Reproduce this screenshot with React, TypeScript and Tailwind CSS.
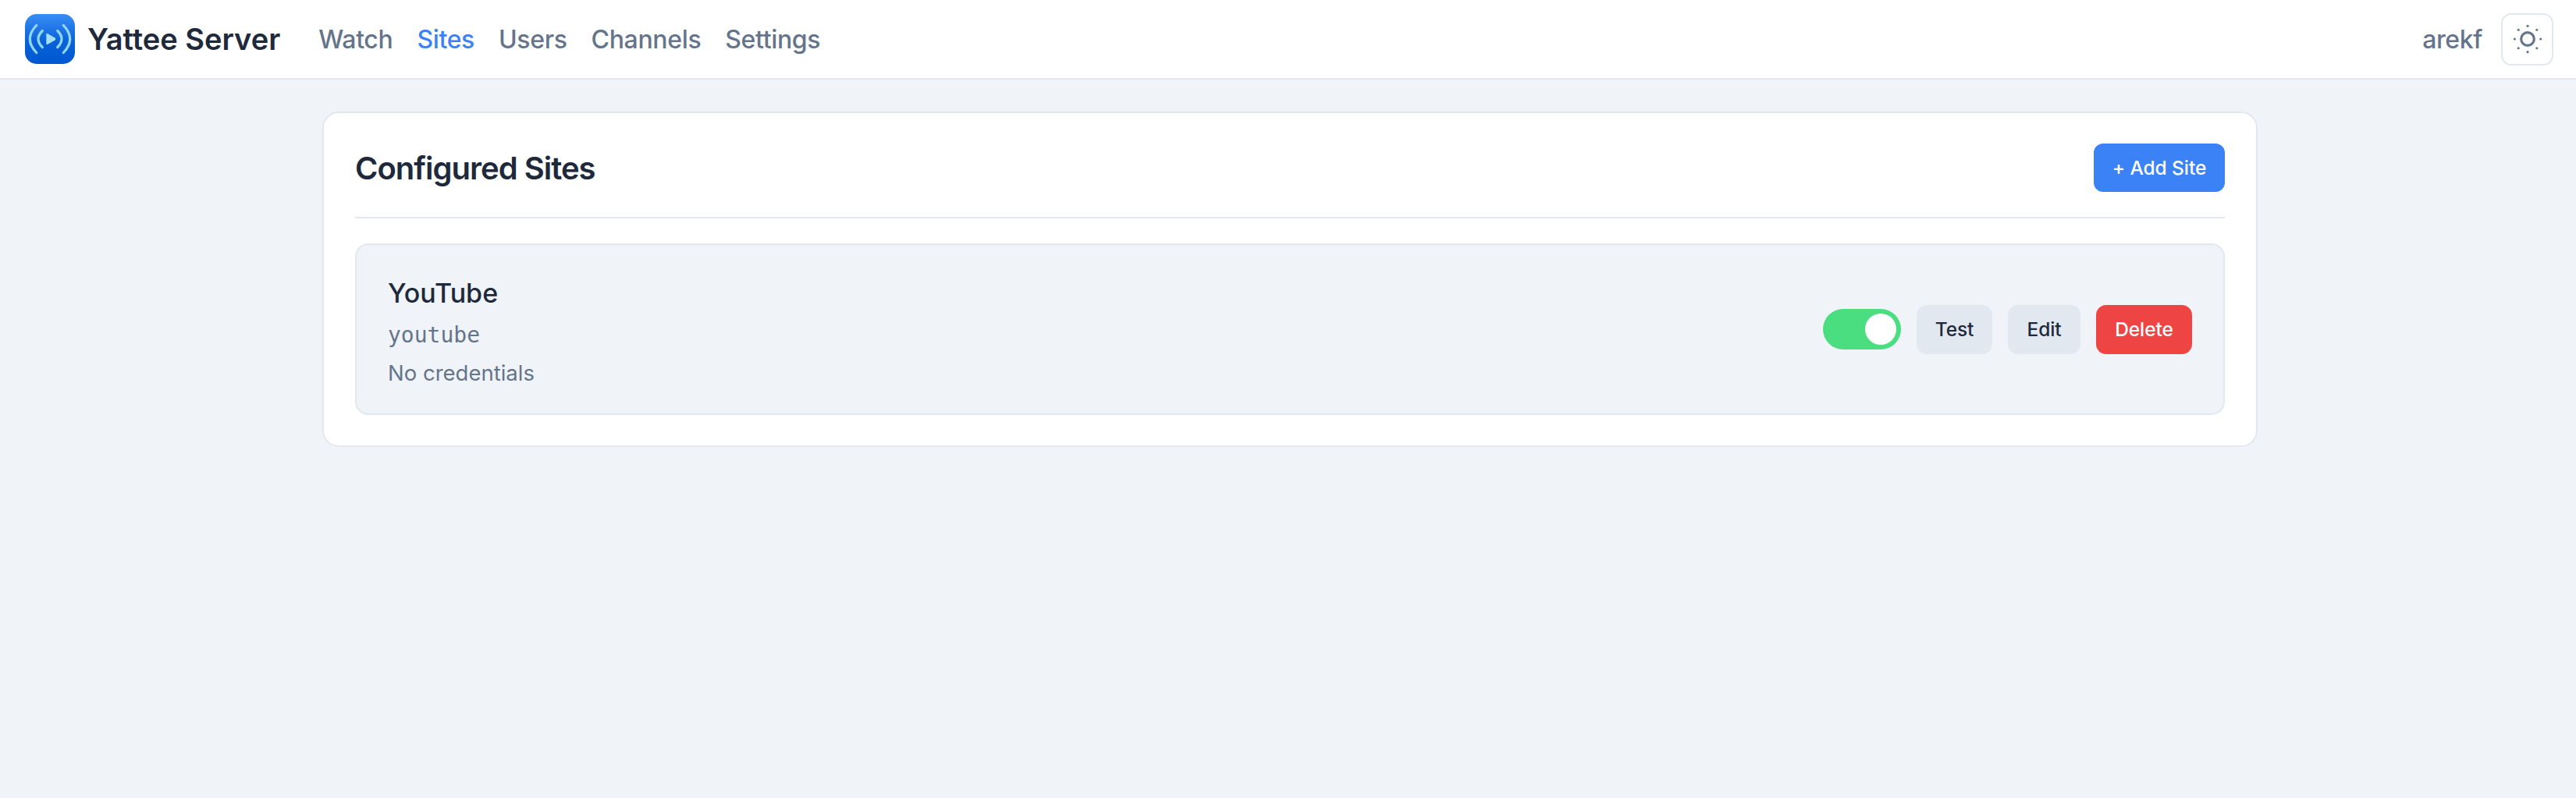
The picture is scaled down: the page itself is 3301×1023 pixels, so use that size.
import { SunDim } from "lucide-react";

const navItems = [
  { label: "Watch", active: false },
  { label: "Sites", active: true },
  { label: "Users", active: false },
  { label: "Channels", active: false },
  { label: "Settings", active: false },
];

function Logo() {
  return (
    <svg viewBox="0 0 64 64" className="h-[64px] w-[64px] shrink-0">
      <defs>
        <linearGradient id="logoBg" x1="0" y1="0" x2="0" y2="1">
          <stop offset="0" stopColor="#3a8df6" />
          <stop offset="0.55" stopColor="#0a62d8" />
          <stop offset="1" stopColor="#0058d2" />
        </linearGradient>
      </defs>
      <rect width="64" height="64" rx="15" fill="url(#logoBg)" />
      <g fill="none" stroke="#8fd8f5" strokeWidth="3.2" strokeLinecap="round">
        <path d="M14.7 14.5 Q-2.1 32 14.7 49.5" />
        <path d="M49.3 14.5 Q66.1 32 49.3 49.5" />
        <path d="M22.3 21.5 Q11.7 32 22.3 42.5" />
        <path d="M41.7 21.5 Q52.3 32 41.7 42.5" />
      </g>
      <path d="M27.3 26 Q27.3 24.2 29.2 25.2 L38.6 30.6 Q40 32 38.6 33.4 L29.2 38.8 Q27.3 39.8 27.3 38 Z" fill="#a5e0f5" />
    </svg>
  );
}

export default function App() {
  return (
    <div className="min-h-[1023px] bg-[#f0f4f8] font-['Inter',sans-serif] text-[#1e293b]">
      <header className="flex h-[102px] items-center justify-between border-b-2 border-[#e2e8f0] bg-white pl-[32px] pr-[29px]">
        <div className="flex items-center">
          <Logo />
          <span className="ml-[16px] text-[38px] font-semibold">Yattee Server</span>
          <nav className="ml-[49px] flex items-center gap-[31px] pt-[1px]">
            {navItems.map((item) => (
              <a
                key={item.label}
                className={item.active ? "text-[32px] font-medium tracking-[-0.35px] text-[#3b82f6]" : "text-[32px] font-medium tracking-[-0.35px] text-[#64748b]"}
              >
                {item.label}
              </a>
            ))}
          </nav>
        </div>
        <div className="flex items-center gap-[24px]">
          <span className="pt-[1px] text-[32px] font-medium tracking-[-0.4px] text-[#64748b]">arekf</span>
          <button className="flex h-[67px] w-[67px] items-center justify-center rounded-[13px] border-2 border-[#e2e8f0] bg-white text-[#64748b]">
            <SunDim size={50} strokeWidth={1.5} />
          </button>
        </div>
      </header>

      <main className="pl-[413px] pt-[41px]">
        <section className="h-[430px] w-[2480px] rounded-[21px] border-2 border-[#e2e8f0] bg-white px-[40px] pt-[39px]">
          <div className="flex h-[96px] items-start justify-between border-b-2 border-[#e2e8f0]">
            <h2 className="text-[40px] leading-[63px] font-semibold tracking-[-1px]">Configured Sites</h2>
            <button className="h-[62px] w-[168px] rounded-[12px] bg-[#3b82f6] text-[24.5px] font-medium tracking-[-0.1px] text-white">+ Add Site</button>
          </div>
          <div className="mt-[32px] flex h-[220px] items-center justify-between rounded-[17px] border-2 border-[#e2e8f0] bg-[#f0f4f8] px-[40px]">
            <div className="pt-[6px]">
              <h3 className="text-[34px] leading-[50px] font-medium">YouTube</h3>
              <p className="mt-[8px] font-['DejaVu_Sans_Mono',monospace] text-[28px] leading-[42px] text-[#64748b]">youtube</p>
              <p className="mt-[6px] text-[27.5px] leading-[42px] text-[#64748b]">No credentials</p>
            </div>
            <div className="flex items-center gap-[20px]">
              <div className="flex h-[52px] w-[100px] items-center justify-end rounded-full bg-[#4ade80] pr-[6px]">
                <div className="h-[40px] w-[40px] rounded-full bg-white" />
              </div>
              <button className="h-[63px] w-[97px] rounded-[13px] bg-[#e2e8f0] text-[24.5px] font-medium tracking-[-0.1px]">Test</button>
              <button className="h-[63px] w-[93px] rounded-[13px] bg-[#e2e8f0] text-[24.5px] font-medium tracking-[-0.1px]">Edit</button>
              <button className="h-[63px] w-[123px] rounded-[13px] bg-[#ef4444] text-[24.5px] font-medium tracking-[-0.1px] text-white">Delete</button>
            </div>
          </div>
        </section>
      </main>
    </div>
  );
}
